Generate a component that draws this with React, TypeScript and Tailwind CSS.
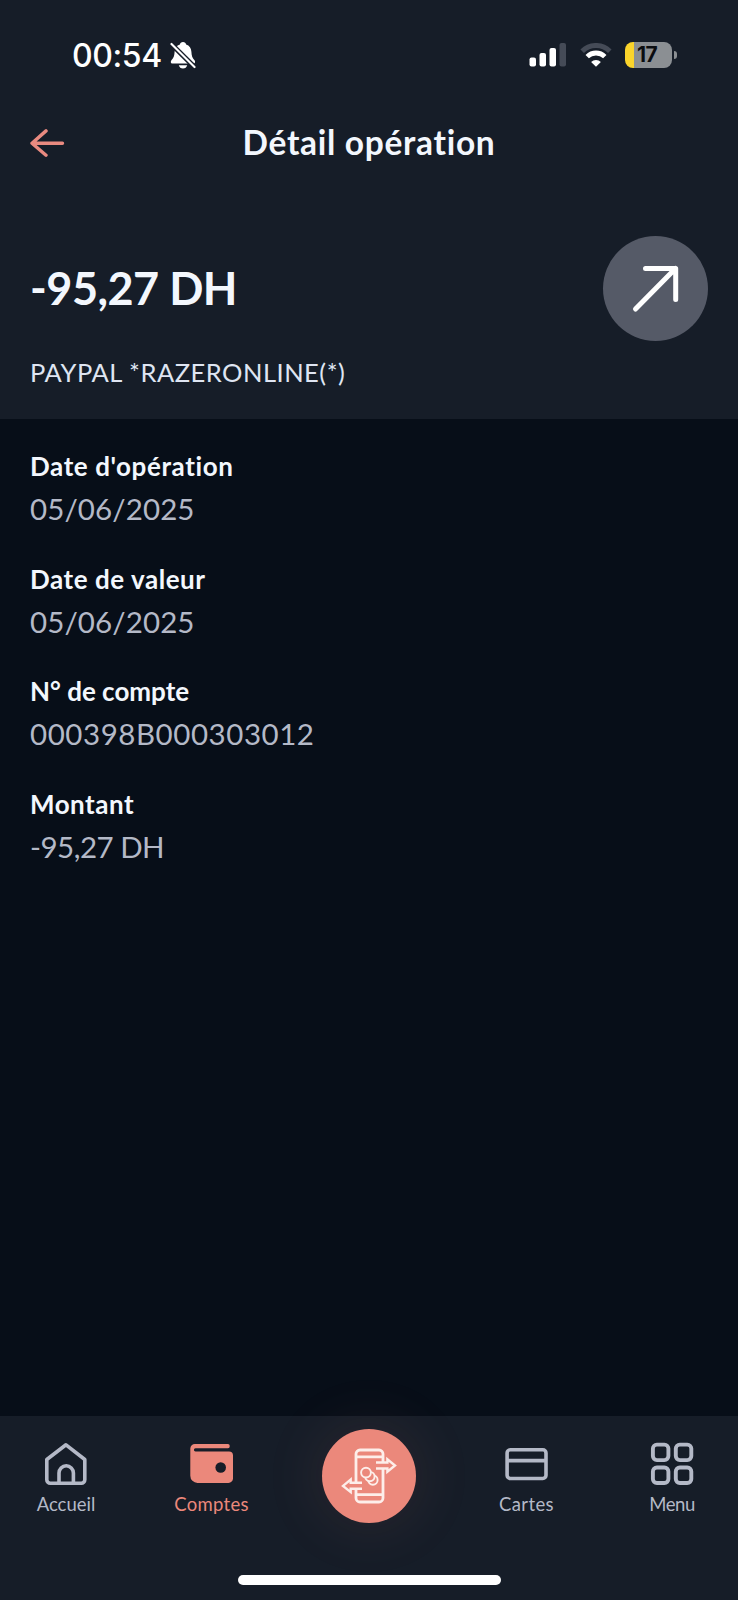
import type { ReactNode } from 'react';

const DETAILS = [
  { label: "Date d'opération", value: '05/06/2025', labelSpacing: 'tracking-[0.6px]', valueSpacing: 'tracking-[0.1px]' },
  { label: 'Date de valeur', value: '05/06/2025', labelSpacing: 'tracking-[0.550px]', valueSpacing: 'tracking-[0.1px]' },
  { label: 'N° de compte', value: '000398B000303012', labelSpacing: 'tracking-normal', valueSpacing: 'tracking-[0.550px]' },
  { label: 'Montant', value: '-95,27 DH', labelSpacing: 'tracking-[0.5px]', valueSpacing: 'tracking-[-0.5px]' },
];

const BellOffIcon = () => (
  <svg className="h-7 w-[26px]" viewBox="0 0 26 28">
    <path
      fill="#fff"
      d="M13 1c1.700 0 2.900 1 3.100 2.400 3.400 1 5.100 3.800 5.300 7.300.2 4.300.9 6.300 3.100 8.500.9.900.9 3.300-.9 3.300H2.200c-1.700 0-1.700-2.400-.8-3.300 2.200-2.200 3-4.200 3.200-8.500.2-3.500 1.900-6.300 5.300-7.300C10.100 2 11.300 1 13 1z"
    />
    <path fill="#fff" d="M8.800 24.200h8.400c-.5 2-2.100 3.300-4.200 3.300s-3.700-1.300-4.200-3.300z" />
    <path stroke="#161d28" strokeWidth="5" d="M-1 .8l28 27.700" />
    <path stroke="#fff" strokeWidth="2.200" strokeLinecap="round" d="M1.500 3l23 23" />
  </svg>
);

const SignalIcon = () => (
  <svg className="h-6 w-[38px]" viewBox="0 0 38 24">
    <rect x="0.500" y="14.500" width="6.500" height="9" rx="2" fill="#fff" />
    <rect x="10.500" y="10" width="6.500" height="13.500" rx="2" fill="#fff" />
    <rect x="20.500" y="5" width="6.500" height="18.500" rx="2" fill="#fff" />
    <rect x="30.500" y="0" width="6.500" height="23.500" rx="2" fill="#454b57" />
  </svg>
);

const WifiIcon = () => (
  <svg className="h-6 w-8" viewBox="0 0 32 24">
    <path fill="none" stroke="#454b57" strokeWidth="5" d="M2.200 8.200a19.500 19.500 0 0 1 27.600 0" />
    <path fill="none" stroke="#fff" strokeWidth="4.800" d="M7.200 13.600a12.600 12.600 0 0 1 17.600 0" />
    <path fill="#fff" d="M16 23.800l-4.900-4.900a7.300 7.300 0 0 1 9.800 0z" />
  </svg>
);

const BackIcon = () => (
  <svg className="h-7 w-9" viewBox="0 0 36 28" fill="none" stroke="#e98a80" strokeWidth="3.400" strokeLinecap="round" strokeLinejoin="round">
    <path d="M17 1.900L3 14.200l14 12M3 14.200h30.500" />
  </svg>
);

const HomeIcon = () => (
  <svg className="size-11" viewBox="0 0 44 44" fill="none" stroke="#b4b9c7" strokeWidth="3.600" strokeLinejoin="round">
    <path d="M22 2.800L40.800 17.500v20.200a3.500 3.500 0 0 1-3.500 3.500H6.300a3.500 3.500 0 0 1-3.500-3.500V17.500z" />
    <path d="M15 41V31a7.200 7.200 0 0 1 14.400 0v10" />
  </svg>
);

const WalletIcon = () => (
  <svg className="size-11" viewBox="0 0 44 44">
    <path
      fill="#eb887b"
      d="M5 2h33a1.700 1.700 0 0 1 1.700 1.700v.8A1.700 1.700 0 0 1 38 6.200H5.500a1.500 1.500 0 0 0 0 3.200H39a4 4 0 0 1 4 4v23a4.500 4.500 0 0 1-4.500 4.500H7.500A7.200 7.200 0 0 1 .3 33.700V6.500A4.600 4.600 0 0 1 5 2z"
    />
    <circle cx="30.700" cy="25.500" r="5.300" fill="#161d28" />
  </svg>
);

const CardIcon = () => (
  <svg className="size-11" viewBox="0 0 44 44" fill="none" stroke="#b4b9c7" strokeWidth="3.600">
    <rect x="2.100" y="7.800" width="38.900" height="28.700" rx="3.200" />
    <path d="M2.100 18.600H41" />
  </svg>
);

const MenuIcon = () => (
  <svg className="size-11" viewBox="0 0 44 44" fill="none" stroke="#b4b9c7" strokeWidth="3.900">
    <rect x="2.900" y="2.600" width="15.500" height="15.500" rx="4" />
    <rect x="25.800" y="2.600" width="15.500" height="15.500" rx="4" />
    <rect x="2.900" y="25.500" width="15.500" height="15.500" rx="4" />
    <rect x="25.800" y="25.500" width="15.500" height="15.500" rx="4" />
  </svg>
);

const TransferIcon = () => (
  <svg className="size-14" viewBox="0 0 56 56" fill="none" stroke="#fdeeea" strokeWidth="2.800">
    <path d="M15 34V6a4 4 0 0 1 4-4h19a4 4 0 0 1 4 4v8M42 21v29a4 4 0 0 1-4 4H19a4 4 0 0 1-4-4v-9" />
    <path d="M15 8.900h27M15 46.700h27" />
    <path strokeWidth="2.400" d="M35 14.500h11.400v-3.200l7.600 6.200-7.600 6.200v-3.200H35" />
    <path strokeWidth="2.400" d="M21 34.700H9.700v-3.200L2 37.900l7.700 6.200v-3.400H21" />
    <g fill="#eb887b" strokeWidth="1.900">
      <circle cx="31.900" cy="32" r="4.700" />
      <circle cx="28.900" cy="28.600" r="4.700" />
      <circle cx="25" cy="24.600" r="4.900" />
    </g>
  </svg>
);

const StatusBar = () => (
  <div className="flex h-[110px] items-center justify-between pr-[61px] pl-[72px]">
    <div className="flex items-center gap-[8px]">
      <span className="pt-[2px] font-['Inter',sans-serif] text-[32px] leading-10 font-medium tracking-[-0.4px] text-white">00:54</span>
      <BellOffIcon />
    </div>
    <div className="flex items-center">
      <SignalIcon />
      <div className="ml-[13px]">
        <WifiIcon />
      </div>
      <div className="ml-[13px] flex h-[26px] w-[47px] items-center overflow-hidden rounded-[8px] bg-[linear-gradient(to_right,#fbd42b_9px,#8b8f93_9px)] pl-[12px]">
        <span className="font-['Inter',sans-serif] text-[21px] leading-[26px] font-bold tracking-[-0.5px] text-[#0b0d10]">17</span>
      </div>
      <div className="ml-[2px] h-[8px] w-[3px] rounded-r-full bg-[#8b8f93]" />
    </div>
  </div>
);

type NavItemProps = {
  label: string;
  spacing: string;
  active?: boolean;
  children: ReactNode;
};

const NavItem = ({ label, spacing, active, children }: NavItemProps) => (
  <div className="flex flex-col items-center pt-[26px]">
    {children}
    <span className={`mt-[6px] text-[18.500px] leading-6 ${spacing} ${active ? 'text-[#eb887b]' : 'text-[#b4b9c7]'}`}>
      {label}
    </span>
  </div>
);

const BottomNav = () => (
  <nav className="flex h-[184px] flex-col bg-[#161d28]">
    <div className="grid h-[159px] grid-cols-[132px_159px_156px_159px_132px]">
      <NavItem label="Accueil" spacing="tracking-normal">
        <HomeIcon />
      </NavItem>
      <NavItem label="Comptes" spacing="tracking-[0.3px]" active>
        <WalletIcon />
      </NavItem>
      <div className="flex justify-center pt-[13px]">
        <div className="flex size-[94px] items-center justify-center rounded-full bg-[#eb887b] shadow-[0_0_60px_6px_rgba(235,136,123,0.09)]">
          <TransferIcon />
        </div>
      </div>
      <NavItem label="Cartes" spacing="tracking-[0.4px]">
        <CardIcon />
      </NavItem>
      <NavItem label="Menu" spacing="tracking-[-0.4px]">
        <MenuIcon />
      </NavItem>
    </div>
    <div className="h-[10px] w-[263px] self-center rounded-full bg-white" />
  </nav>
);

export default function App() {
  return (
    <div className="flex h-[1600px] w-[738px] flex-col overflow-hidden bg-[#070e18] font-['Lato',sans-serif]">
      <header className="h-[419px] bg-[#161d28]">
        <StatusBar />
        <div className="grid h-[65px] grid-cols-[64px_1fr_64px] items-center px-[29px]">
          <BackIcon />
          <h1 className="pb-[2px] text-center text-[33.500px] leading-10 font-bold tracking-[0.7px] text-[#f3f7fd]">Détail opération</h1>
        </div>
        <div className="mt-[60px] flex h-[106px] items-center justify-between pr-[30px] pl-[30px]">
          <p className="text-[45px] leading-[54px] font-bold tracking-[-0.5px] text-[#f3f7fd]">-95,27 DH</p>
          <div className="flex size-[105px] items-center justify-center rounded-full bg-[#555a67]">
            <svg className="size-[52px]" viewBox="0 0 52 52" fill="none" stroke="#fff" strokeWidth="5" strokeLinecap="round" strokeLinejoin="round">
              <path d="M5.500 47L45.500 6.500M15.500 6.500h30.200v31" />
            </svg>
          </div>
        </div>
        <p className="mt-[15px] pl-[30px] text-[25.500px] leading-8 tracking-[0.5px] text-[#dfe5f2]">PAYPAL *RAZERONLINE(*)</p>
      </header>

      <main className="flex flex-1 flex-col gap-[26.700px] pt-[29px] pl-[30px]">
        {DETAILS.map(({ label, value, labelSpacing, valueSpacing }) => (
          <div key={label}>
            <p className={`text-[26px] leading-9 font-bold text-[#f3f7fd] ${labelSpacing}`}>{label}</p>
            <p className={`text-[29.500px] leading-[50px] text-[#b4b9c7] ${valueSpacing}`}>{value}</p>
          </div>
        ))}
      </main>

      <BottomNav />
    </div>
  );
}
